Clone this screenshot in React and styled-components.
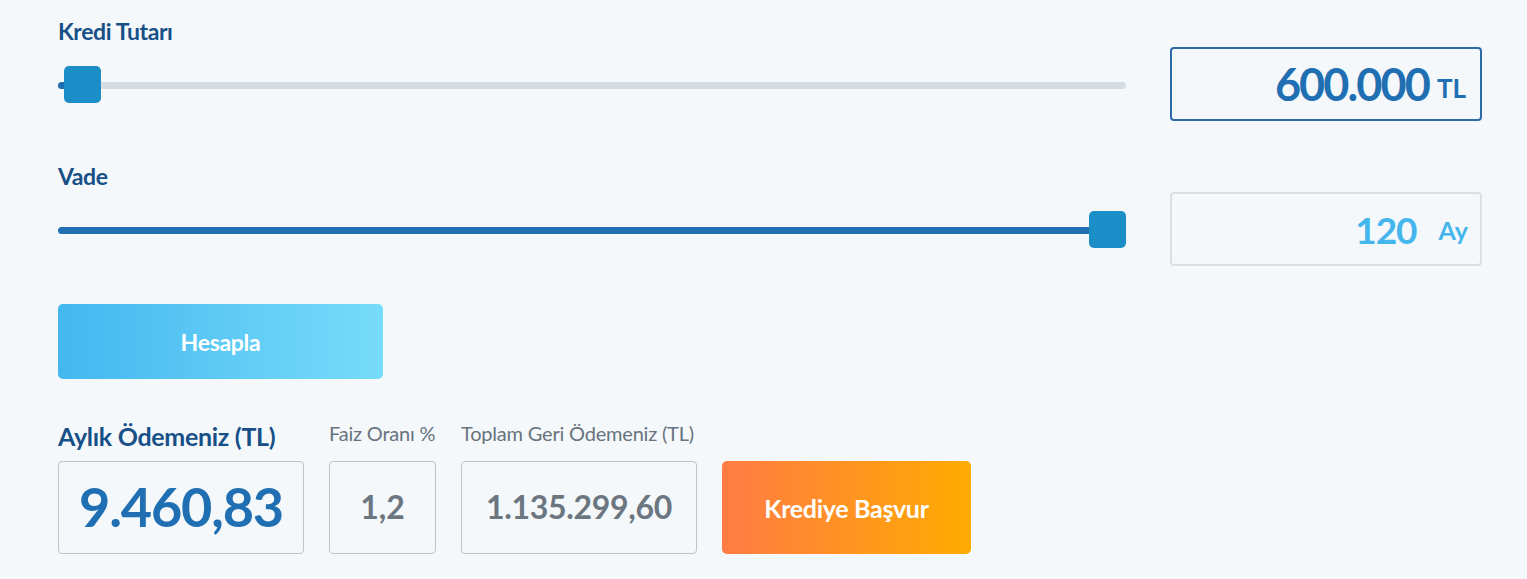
import React from "react";
import styled, { createGlobalStyle } from "styled-components";

const Global = createGlobalStyle`
  html, body { margin: 0; padding: 0; background: #f4f8fb; }
  body { font-family: Lato, "Open Sans", sans-serif; }
  * { box-sizing: border-box; }
`;

const Page = styled.div`
  width: 1527px;
  height: 579px;
  padding: 18px 45px 0 58px;
  background: #f4f8fb;
  display: flex;
  flex-direction: column;
`;

const Field = styled.div`
  display: flex;
  flex-direction: column;
  margin-bottom: ${(p) => p.$mb || 0}px;
`;

const Label = styled.div`
  font-size: 23px;
  font-weight: 700;
  color: #174f87;
  line-height: 27px;
  height: 27px;
  letter-spacing: -0.4px;
`;

const SliderRow = styled.div`
  display: flex;
  align-items: center;
  gap: 44px;
  margin-top: 2px;
`;

const Track = styled.div`
  position: relative;
  flex: 1;
  height: 7px;
  border-radius: 4px;
  background: ${(p) => (p.$full ? "#1f6fb2" : "#d5dde2")};
  margin-top: 3px;
`;

const Fill = styled.div`
  height: 100%;
  background: #1f6fb2;
  border-radius: 4px 0 0 4px;
`;

const Thumb = styled.div`
  position: absolute;
  top: 50%;
  width: 37px;
  height: 37px;
  margin-top: -20px;
  border-radius: 5px;
  background: #1b8dc7;
`;

const ValueBox = styled.div`
  width: 312px;
  height: 74px;
  border-radius: 4px;
  border: ${(p) => (p.$active ? "2px solid #2a6aa6" : "2px solid #dadfe3")};
  display: flex;
  align-items: center;
  justify-content: flex-end;
  padding-right: ${(p) => p.$pr}px;
  gap: ${(p) => p.$gap}px;
`;

const BigValue = styled.span`
  font-size: ${(p) => p.$size}px;
  font-weight: 700;
  color: ${(p) => p.$color};
  letter-spacing: ${(p) => p.$ls ?? -1}px;
  line-height: 1;
`;

const Unit = styled.span`
  font-size: ${(p) => p.$size}px;
  font-weight: 700;
  color: ${(p) => p.$color};
  line-height: 1;
  margin-top: ${(p) => p.$mt || 0}px;
`;

const GradButton = styled.button`
  border: none;
  border-radius: 5px;
  width: ${(p) => p.$w}px;
  height: ${(p) => p.$h}px;
  background: ${(p) => p.$bg};
  color: #fff;
  font-family: inherit;
  font-weight: 700;
  font-size: ${(p) => p.$fs}px;
  letter-spacing: -0.3px;
  cursor: pointer;
  padding: 0;
`;

const ResultRow = styled.div`
  display: flex;
  align-items: flex-end;
  gap: 25px;
  margin-top: 41px;
`;

const ResultCol = styled.div`
  display: flex;
  flex-direction: column;
`;

const ResultLabel = styled.div`
  font-size: ${(p) => (p.$main ? 25 : 20)}px;
  font-weight: ${(p) => (p.$main ? 700 : 400)};
  color: ${(p) => (p.$main ? "#174f87" : "#68737d")};
  line-height: 26px;
  margin-bottom: ${(p) => (p.$main ? 12 : 15)}px;
  letter-spacing: ${(p) => (p.$main ? "-0.3px" : "-0.2px")};
  white-space: nowrap;
`;

const ResultBox = styled.div`
  width: ${(p) => p.$w}px;
  height: 93px;
  border: 1px solid #bcc3c9;
  border-radius: 4px;
  display: flex;
  align-items: center;
  justify-content: center;
  font-weight: 700;
  font-size: ${(p) => p.$fs}px;
  color: ${(p) => p.$color};
  letter-spacing: ${(p) => p.$ls || 0}px;
  padding-bottom: 2px;
`;

function Slider({ percent, full, thumbLeft }) {
  return (
    <Track $full={full}>
      {!full && <Fill style={{ width: `${percent}%` }} />}
      <Thumb style={thumbLeft} />
    </Track>
  );
}

export default function App() {
  return (
    <>
      <Global />
      <Page>
        <Field $mb={42}>
          <Label>Kredi Tutarı</Label>
          <SliderRow>
            <Slider percent={1} thumbLeft={{ left: 6 }} />
            <ValueBox $active $pr={14} $gap={8}>
              <BigValue $size={45} $ls={-1.9} $color="#1f6fb2">600.000</BigValue>
              <Unit $size={26} $color="#1f6fb2" $mt={7}>TL</Unit>
            </ValueBox>
          </SliderRow>
        </Field>
        <Field $mb={38}>
          <Label>Vade</Label>
          <SliderRow>
            <Slider full thumbLeft={{ right: 0 }} />
            <ValueBox $pr={12} $gap={22}>
              <BigValue $size={37} $color="#45b6ec">120</BigValue>
              <Unit $size={25} $color="#45b6ec" $mt={2}>Ay</Unit>
            </ValueBox>
          </SliderRow>
        </Field>
        <GradButton
          $w={325}
          $h={75}
          $fs={23}
          $bg="linear-gradient(90deg, #43b7f0 0%, #77dcf9 100%)"
        >
          Hesapla
        </GradButton>
        <ResultRow>
          <ResultCol>
            <ResultLabel $main>Aylık Ödemeniz (TL)</ResultLabel>
            <ResultBox $w={246} $fs={54} $color="#1f6fb2" $ls={-1.2}>
              9.460,83
            </ResultBox>
          </ResultCol>
          <ResultCol>
            <ResultLabel>Faiz Oranı %</ResultLabel>
            <ResultBox $w={107} $fs={32} $color="#6b7680">
              1,2
            </ResultBox>
          </ResultCol>
          <ResultCol>
            <ResultLabel>Toplam Geri Ödemeniz (TL)</ResultLabel>
            <ResultBox $w={236} $fs={32} $color="#6b7680" $ls={-0.3}>
              1.135.299,60
            </ResultBox>
          </ResultCol>
          <GradButton
            $w={249}
            $h={93}
            $fs={25}
            $bg="linear-gradient(90deg, #ff7b44 0%, #ffab00 100%)"
          >
            Krediye Başvur
          </GradButton>
        </ResultRow>
      </Page>
    </>
  );
}
